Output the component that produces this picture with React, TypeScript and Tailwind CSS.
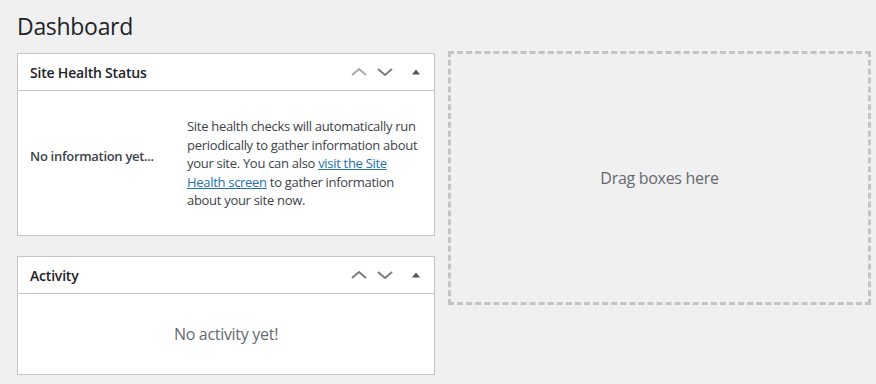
import React from 'react'

const FONT = { fontFamily: '"Open Sans", "Noto Sans", "Liberation Sans", sans-serif' }

function ChevronUp({ disabled }: { disabled?: boolean }) {
  return (
    <svg width="16" height="10" viewBox="0 0 16 10" fill="none">
      <polyline points="1,8 8,2 15,8" stroke={disabled ? '#a7aaad' : '#787c82'} strokeWidth="2" />
    </svg>
  )
}

function ChevronDown() {
  return (
    <svg width="16" height="10" viewBox="0 0 16 10" fill="none">
      <polyline points="1,2 8,8 15,2" stroke="#787c82" strokeWidth="2" />
    </svg>
  )
}

function Triangle() {
  return (
    <svg width="10" height="6" viewBox="0 0 10 6">
      <polygon points="1,5.5 5,0.5 9,5.5" fill="#50575e" />
    </svg>
  )
}

function PostboxHeader({ title, first }: { title: string; first?: boolean }) {
  return (
    <div className="flex items-center h-[37px] border-b border-[#c3c4c7]">
      <h2 className="flex-1 pl-3 pt-[2px] text-[14px] font-semibold text-[#1d2327] leading-[1.4] tracking-[-0.2px]">{title}</h2>
      <button className="w-[26px] h-9 flex items-center justify-center">
        <ChevronUp disabled={first} />
      </button>
      <button className="w-[26px] h-9 flex items-center justify-center">
        <ChevronDown />
      </button>
      <button className="w-9 h-9 flex items-center justify-center">
        <Triangle />
      </button>
    </div>
  )
}

export default function App() {
  return (
    <div className="min-h-screen bg-[#f0f0f1] pl-[17px] text-[13px] text-[#3c434a]" style={FONT}>
      <h1 className="pt-[11px] text-[23px] font-normal leading-[30px] text-[#1d2327] tracking-[-0.3px]">Dashboard</h1>

      <div className="flex items-start gap-[13px] mt-[10px]">
        {/* left column */}
        <div className="w-[418px] pt-[2px] flex flex-col gap-5">
          <div className="bg-white border border-[#c3c4c7]">
            <PostboxHeader title="Site Health Status" first />
            <div className="flex h-[144px] px-3">
              <div className="w-[157px] flex-none pt-[56px] font-semibold leading-[18px] tracking-[-0.3px]">
                No information yet...
              </div>
              <p className="flex-1 pt-[26px] leading-[18.5px] tracking-[-0.3px] whitespace-nowrap">
                Site health checks will automatically run
                <br />
                periodically to gather information about
                <br />
                your site. You can also{' '}
                <a href="#" className="text-[#2271b1] underline">visit the Site</a>
                <br />
                <a href="#" className="text-[#2271b1] underline">Health screen</a> to gather information
                <br />
                about your site now.
              </p>
            </div>
          </div>

          <div className="bg-white border border-[#c3c4c7]">
            <PostboxHeader title="Activity" />
            <div className="h-[80px] flex items-center justify-center text-[16px] text-[#646970] tracking-[-0.3px]">
              No activity yet!
            </div>
          </div>
        </div>

        {/* right column: empty drop zone */}
        <div className="w-[423px] h-[254px] border-[3px] border-dashed border-[#c3c4c7] flex items-center justify-center text-[16px] text-[#646970] tracking-[-0.3px]">
          Drag boxes here
        </div>
      </div>
    </div>
  )
}
